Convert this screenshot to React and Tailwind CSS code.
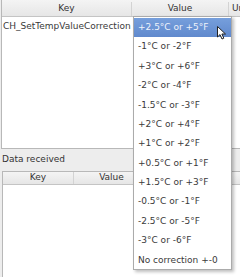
import React from 'react';

const options = [
  '+2.5°C or +5°F',
  '-1°C or -2°F',
  '+3°C or +6°F',
  '-2°C or -4°F',
  '-1.5°C or -3°F',
  '+2°C or +4°F',
  '+1°C or +2°F',
  '+0.5°C or +1°F',
  '+1.5°C or +3°F',
  '-0.5°C or -1°F',
  '-2.5°C or -5°F',
  '-3°C or -6°F',
  'No correction +-0',
];

function HeaderCell({ children, className = '' }) {
  return (
    <div className={'flex items-center justify-center border-r border-[#d3d3d3] ' + className}>
      {children}
    </div>
  );
}

export default function App() {
  return (
    <div className="relative w-[240px] h-[277px] overflow-hidden bg-[#ededed] font-['DejaVu_Sans',sans-serif] text-[9px] text-[#3a3a3a] flex flex-col">
      {/* Top table */}
      <div className="ml-[1px] w-[260px] h-[149px] shrink-0 flex flex-col bg-white border-l border-b border-[#b8b8b8]">
        <div className="h-[17px] pt-[2px] flex bg-gradient-to-b from-[#f4f4f4] to-[#e6e6e6] border-b border-[#c4c4c4] text-[#333]">
          <HeaderCell className="w-[130px]">Key</HeaderCell>
          <HeaderCell className="w-[97px]">Value</HeaderCell>
          <div className="flex items-center pl-[3px]">Unit</div>
        </div>
        <div className="h-[19px] flex items-center">
          <div className="w-[130px] pl-[1px] whitespace-nowrap overflow-hidden">CH_SetTempValueCorrection</div>
        </div>
      </div>

      {/* Label */}
      <div className="h-[22px] shrink-0 pl-[2px] flex items-center text-[#333]">Data received</div>

      {/* Bottom table */}
      <div className="ml-[2px] w-[260px] flex-1 flex flex-col bg-white border-l border-t border-[#b8b8b8]">
        <div className="h-[13px] flex bg-gradient-to-b from-[#f4f4f4] to-[#e6e6e6] border-b border-[#c4c4c4] text-[#333]">
          <HeaderCell className="w-[71px]">Key</HeaderCell>
          <HeaderCell className="w-[76px]">Value</HeaderCell>
          <div className="flex-1" />
        </div>
        <div className="flex-1" />
      </div>

      {/* Dropdown popup */}
      <div className="absolute left-[133px] top-[16px] w-[99px] h-[254px] bg-white border border-[#ababab] shadow-[2px_2px_3px_rgba(0,0,0,0.25)] pt-[1px]">
        {options.map((o, i) => (
          <div
            key={o}
            className={
              'h-[19.4px] flex items-center pl-[4px] whitespace-nowrap ' +
              (i === 0 ? 'bg-gradient-to-b from-[#769fdc] to-[#6089cd] text-[#eef3fb]' : 'text-[#3a3a3a]')
            }
          >
            {o}
          </div>
        ))}
      </div>

      {/* Mouse pointer */}
      <svg className="absolute left-[217px] top-[26px]" width="10" height="14" viewBox="0 0 10 14">
        <path d="M0.5 0.5 L0.5 11 L3 8.6 L5 13 L6.8 12.2 L4.9 8 L8.5 8 Z" fill="#fff" stroke="#222" strokeWidth="1" strokeLinejoin="round" />
      </svg>
    </div>
  );
}
